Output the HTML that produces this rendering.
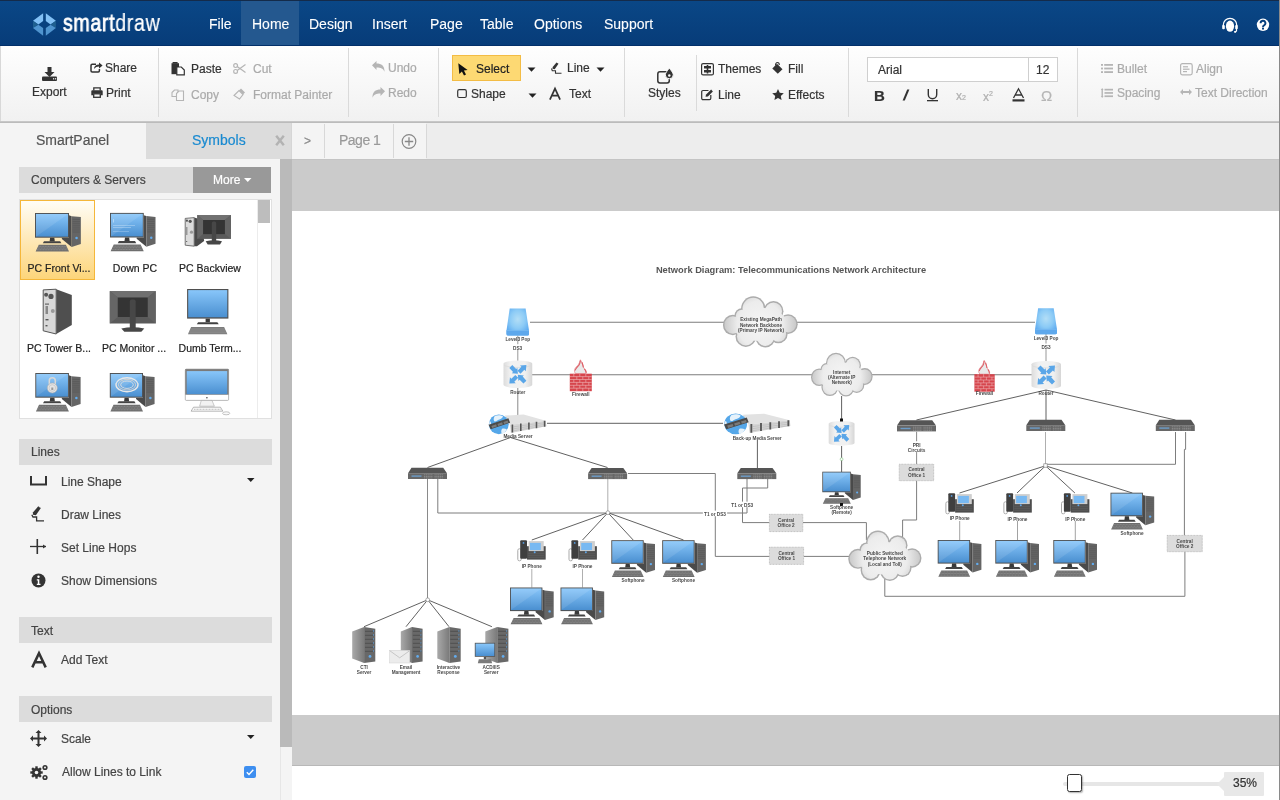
<!DOCTYPE html>
<html><head><meta charset="utf-8">
<style>
*{margin:0;padding:0;box-sizing:border-box}
html,body{width:1280px;height:800px;overflow:hidden;background:#fff;font-family:"Liberation Sans",sans-serif}
body>*{will-change:transform}
.a{position:absolute}
.t{position:absolute;white-space:nowrap;line-height:1;-webkit-text-stroke:0.2px currentColor}
#top{left:0;top:0;width:1280px;height:46px;background:linear-gradient(#0a4786,#073c79);border-top:1px solid #142b4a;border-bottom:1px solid #03306a}
.nav{position:absolute;top:17px;color:#fff;font-size:14px;line-height:1;-webkit-text-stroke:0.1px #fff}
#tb{left:0;top:46px;width:1279px;height:75px;background:linear-gradient(#fefefe,#f1f1f1);border-left:1px solid #d8d8d8}
.sep{position:absolute;width:1px;background:#dadada}
.tt{position:absolute;font-size:12px;line-height:1;color:#333;white-space:nowrap;-webkit-text-stroke:0.2px currentColor}
.dis{color:#aaa}
svg{position:absolute;overflow:visible}
</style></head><body>
<!-- top bar -->
<div class="a" id="top"></div>
<div class="a" style="left:1279px;top:0;width:1px;height:800px;background:#8a8a8a"></div>
<div class="a" style="left:241px;top:1px;width:58px;height:44px;background:#24588f"></div>
<svg style="left:33px;top:12.8px" width="23" height="23" viewBox="0 0 23.2 23.2">
 <polygon points="10.2,0.2 0,7.9 5.4,11.5 10.2,8.1" fill="#82c0f5"/>
 <polygon points="12.9,0.2 23.1,7.9 17.7,11.5 12.9,8.1" fill="#82c0f5"/>
 <polygon points="0,7.9 5.4,11.5 0,15.1" fill="#1f6090"/>
 <polygon points="23.1,7.9 17.7,11.5 23.1,15.1" fill="#1f6090"/>
 <polygon points="0,15.1 5.4,11.8 10.2,15.1 10.2,23" fill="#4f94cf"/>
 <polygon points="23.1,15.1 17.7,11.8 12.9,15.1 12.9,23" fill="#4f94cf"/>
</svg>
<div class="t" style="left:62.5px;top:12px;color:#fff;font-size:23px;transform:scaleX(0.85);transform-origin:0 0;letter-spacing:0.8px"><span style="-webkit-text-stroke:0.8px #fff">smart</span>draw</div>
<div class="nav" style="left:209px">File</div>
<div class="nav" style="left:252px">Home</div>
<div class="nav" style="left:309px">Design</div>
<div class="nav" style="left:372px">Insert</div>
<div class="nav" style="left:430px">Page</div>
<div class="nav" style="left:480px">Table</div>
<div class="nav" style="left:534px">Options</div>
<div class="nav" style="left:604px">Support</div>

<!-- toolbar -->
<div class="a" id="tb"></div>
<div class="a" style="left:0;top:121px;width:1279px;height:2px;background:linear-gradient(#cdcdcd,#b5b5b5)"></div>


<!-- separators -->
<div class="sep" style="left:158px;top:48px;height:69px"></div>
<div class="sep" style="left:348px;top:48px;height:69px"></div>
<div class="sep" style="left:438px;top:48px;height:69px"></div>
<div class="sep" style="left:624px;top:48px;height:69px"></div>
<div class="sep" style="left:696px;top:55px;height:56px"></div>
<div class="sep" style="left:848px;top:48px;height:69px"></div>
<div class="sep" style="left:1077px;top:48px;height:69px"></div>

<!-- Export -->
<svg style="left:42px;top:67px" width="15" height="14" viewBox="0 0 15 14">
 <path d="M5.5 0h4v5h3l-5 5-5-5h3z" fill="#333"/>
 <rect x="0" y="9.5" width="15" height="4.5" rx="1" fill="#333"/>
 <rect x="11" y="11.2" width="1.2" height="1.2" fill="#fff"/><rect x="13" y="11.2" width="1.2" height="1.2" fill="#fff"/>
</svg>
<div class="tt" style="left:32px;top:86px">Export</div>
<!-- Share -->
<svg style="left:90px;top:61px" width="13" height="12" viewBox="0 0 13 12">
 <path d="M6 3.2H2.2a1.2 1.2 0 0 0-1.2 1.2v5.4a1.2 1.2 0 0 0 1.2 1.2h6a1.2 1.2 0 0 0 1.2-1.2V8" fill="none" stroke="#333" stroke-width="1.5"/>
 <path d="M4 8c0-3 2-4.5 5-4.5V1.5l3.6 3-3.6 3V5.5C7 5.5 5.3 6.3 4 8z" fill="#333"/>
</svg>
<div class="tt" style="left:105px;top:62px">Share</div>
<!-- Print -->
<svg style="left:91px;top:87px" width="12" height="11" viewBox="0 0 12 11">
 <path d="M2.8 3.5V0.8h6.4v2.7" fill="none" stroke="#333" stroke-width="1.3"/>
 <path d="M0.3 4.3a1 1 0 0 1 1-1h9.4a1 1 0 0 1 1 1v3.9H9.9V6.6H2.1v1.6H0.3z" fill="#333"/>
 <rect x="2.7" y="6.8" width="6.6" height="3.5" fill="none" stroke="#333" stroke-width="1.3"/>
</svg>
<div class="tt" style="left:106px;top:87px">Print</div>

<!-- Paste -->
<svg style="left:171px;top:62px" width="14" height="13" viewBox="0 0 14 13">
 <path d="M0.5 1.2h7.5v11H0.5z" fill="#333"/>
 <rect x="1.6" y="0" width="5" height="1.6" fill="#333"/>
 <path d="M5.8 5h4.5l3 3v4.8H5.8z" fill="#fff" stroke="#333" stroke-width="1.2"/>
</svg>
<div class="tt" style="left:191px;top:62.6px">Paste</div>
<!-- Cut -->
<svg style="left:233px;top:63px" width="13" height="11" viewBox="0 0 13 11">
 <circle cx="2.6" cy="2.6" r="1.9" fill="none" stroke="#b5b5b5" stroke-width="1.2"/>
 <circle cx="2.6" cy="8.4" r="1.9" fill="none" stroke="#b5b5b5" stroke-width="1.2"/>
 <path d="M4.2 3.6L12.5 9.5M4.2 7.4L12.5 1.5" stroke="#b5b5b5" stroke-width="1.2"/>
</svg>
<div class="tt dis" style="left:252.5px;top:62.6px">Cut</div>
<!-- Copy -->
<svg style="left:171px;top:89px" width="14" height="12" viewBox="0 0 14 12">
 <path d="M1 3.5l2.5-2.5h3.5v6.5H1z" fill="none" stroke="#b5b5b5" stroke-width="1.1"/>
 <path d="M5.5 4.5l2.5-2.5h4.5v9.5H5.5z" fill="#f8f8f8" stroke="#b5b5b5" stroke-width="1.1"/>
</svg>
<div class="tt dis" style="left:191px;top:89px">Copy</div>
<!-- Format painter -->
<svg style="left:233px;top:88px" width="13" height="12" viewBox="0 0 13 12">
 <path d="M1 7.5L6 2.5l4 4-3.5 4.5z" fill="none" stroke="#b5b5b5" stroke-width="1.1"/>
 <path d="M6 2.5L8 0.5l4 4-2 2z" fill="#b5b5b5"/>
</svg>
<div class="tt dis" style="left:252.5px;top:89px">Format Painter</div>

<!-- Undo / Redo -->
<svg style="left:372px;top:61px" width="13" height="11" viewBox="0 0 13 11">
 <path d="M0 4.2L4.5 0v2.6c5 0 8 2 8 8.2-1.2-3-3.5-4.2-8-4.2V9z" fill="#b5b5b5"/>
</svg>
<div class="tt dis" style="left:388px;top:61.6px">Undo</div>
<svg style="left:372px;top:87px" width="13" height="11" viewBox="0 0 13 11">
 <path d="M13 4.2L8.5 0v2.6c-5 0-8 2-8 8.2 1.2-3 3.5-4.2 8-4.2V9z" fill="#b5b5b5"/>
</svg>
<div class="tt dis" style="left:388px;top:86.6px">Redo</div>

<!-- Select button -->
<div class="a" style="left:452px;top:55px;width:69px;height:26px;background:#fdd973;border:1px solid #f3bc45"></div>
<svg style="left:457.5px;top:62.5px" width="10" height="13" viewBox="0 0 10 13">
 <path d="M0.3 0.2L9.6 7 5.9 7.4 8 11.5 6 12.6 3.9 8.4 1.3 11z" fill="#111"/>
</svg>
<div class="tt" style="left:475.5px;top:62.6px;color:#222">Select</div>
<svg style="left:527px;top:67px" width="9" height="5" viewBox="0 0 9 5"><path d="M0.5 0.5h8L4.5 4.8z" fill="#222"/></svg>
<svg style="left:528px;top:93px" width="9" height="5" viewBox="0 0 9 5"><path d="M0.5 0.5h8L4.5 4.8z" fill="#222"/></svg>
<svg style="left:596px;top:67px" width="9" height="5" viewBox="0 0 9 5"><path d="M0.5 0.5h8L4.5 4.8z" fill="#222"/></svg>
<svg style="left:457px;top:89px" width="10" height="9" viewBox="0 0 10 9"><rect x="0.7" y="0.7" width="8.6" height="7.8" rx="1.5" fill="none" stroke="#333" stroke-width="1.2"/></svg>
<div class="tt" style="left:470.5px;top:87.6px">Shape</div>
<!-- Line tool -->
<svg style="left:550px;top:62px" width="12" height="12" viewBox="0 0 12 12">
 <path d="M6.5 0.5l2 1.3-3.8 5.5-2.2-0.5 0.2-1.8z" fill="#333"/>
 <path d="M1.5 6.5l0.8 2.2H5.5v2.5h6" fill="none" stroke="#333" stroke-width="1.1"/>
</svg>
<div class="tt" style="left:567px;top:61.6px">Line</div>
<!-- Text tool -->
<svg style="left:549px;top:88px" width="12" height="12" viewBox="0 0 12 12"><path d="M0.9 11.6L6 0.6 11.1 11.6M2.8 7.6h6.4" fill="none" stroke="#333" stroke-width="1.7"/></svg>
<div class="tt" style="left:568.5px;top:87.6px">Text</div>

<!-- Styles -->
<svg style="left:657px;top:68px" width="17" height="16" viewBox="0 0 17 16">
 <rect x="0.8" y="3.8" width="11.5" height="11.2" rx="2.2" fill="none" stroke="#333" stroke-width="1.5"/>
 <path d="M12.3 0.2c0 0-4 4.5-4 6.6a4 4 0 0 0 8 0c0-2.1-4-6.6-4-6.6z" fill="#333" stroke="#f8f8f8" stroke-width="1"/>
 <circle cx="12.3" cy="7.5" r="1.2" fill="#fff"/>
</svg>
<div class="tt" style="left:647.5px;top:87.2px">Styles</div>
<!-- Themes -->
<svg style="left:701px;top:62.5px" width="13" height="12.5" viewBox="0 0 13 12.5">
 <rect x="0.6" y="0.6" width="11.8" height="11.3" rx="1.5" fill="none" stroke="#333" stroke-width="1.2"/>
 <rect x="3" y="3" width="7" height="2.5" fill="#333"/><rect x="3" y="7" width="7" height="2.5" fill="#333"/>
 <rect x="5.7" y="2" width="1.6" height="8.5" fill="#333"/>
</svg>
<div class="tt" style="left:718px;top:62.6px">Themes</div>
<!-- Fill -->
<svg style="left:772px;top:62px" width="11" height="12" viewBox="0 0 11 12">
 <path d="M0.3 6.5L5 1.8 10.5 7.3 5.8 11.8z" fill="#333"/>
 <path d="M3.5 3.5c0-2 0.8-3 2-3s1.8 1 1.8 2.5" fill="none" stroke="#333" stroke-width="1.1"/>
</svg>
<div class="tt" style="left:787.5px;top:62.6px">Fill</div>
<!-- Line (edit) -->
<svg style="left:701px;top:89px" width="13" height="11" viewBox="0 0 13 11">
 <path d="M7.5 1.5H2a1.3 1.3 0 0 0-1.3 1.3v6.5A1.3 1.3 0 0 0 2 10.6h6.5a1.3 1.3 0 0 0 1.3-1.3V6" fill="none" stroke="#333" stroke-width="1.2"/>
 <path d="M4.5 7.8l0.6-2.2 5-5 1.8 1.8-5 5z" fill="#333"/>
</svg>
<div class="tt" style="left:718px;top:89.2px">Line</div>
<!-- Effects star -->
<svg style="left:772px;top:89px" width="12" height="11" viewBox="0 0 12 11.4">
 <path d="M6 0l1.8 3.8 4.2 0.5-3.1 2.9 0.8 4.2L6 9.3 2.3 11.4l0.8-4.2L0 4.3l4.2-0.5z" fill="#333"/>
</svg>
<div class="tt" style="left:787.5px;top:89.2px">Effects</div>

<!-- Font box -->
<div class="a" style="left:867px;top:57px;width:191px;height:25px;background:#fff;border:1px solid #cfcfcf"></div>
<div class="a" style="left:1028px;top:57px;width:1px;height:25px;background:#cfcfcf"></div>
<div class="tt" style="left:877.5px;top:63.6px;color:#333">Arial</div>
<div class="tt" style="left:1036px;top:63.6px;color:#333">12</div>
<div class="t" style="left:874px;top:87.5px;font-size:15px;font-weight:bold;color:#333">B</div>
<svg style="left:902px;top:89px" width="8" height="12" viewBox="0 0 8 12"><path d="M5.2 0.5h2.2L2.8 11.5H0.6z" fill="#333"/></svg>
<svg style="left:926px;top:88px" width="13" height="14" viewBox="0 0 13 14">
 <path d="M2.3 1v5.5a4.2 4.2 0 0 0 8.4 0V1" fill="none" stroke="#333" stroke-width="1.4"/>
 <rect x="1" y="12" width="11" height="1.3" fill="#333"/>
</svg>
<div class="t" style="left:956px;top:90px;font-size:12px;color:#b0b0b0">x<span style="font-size:7px">2</span></div>
<div class="t" style="left:983px;top:90px;font-size:12px;color:#b0b0b0">x<span style="font-size:7px;vertical-align:5px">2</span></div>
<svg style="left:1012px;top:88px" width="13" height="14" viewBox="0 0 13 14">
 <path d="M1.5 10L6.5 0.8 11.5 10M3.3 7h6.4" fill="none" stroke="#333" stroke-width="1.3"/>
 <rect x="0.5" y="11.3" width="12" height="2.2" fill="#333"/>
</svg>
<div class="t" style="left:1041px;top:87.5px;font-size:15px;color:#b5b5b5">&#937;</div>

<!-- Bullet / Align / Spacing / Direction -->
<svg style="left:1101px;top:64px" width="12" height="9" viewBox="0 0 12 9">
 <g fill="#b5b5b5"><rect x="0" y="0" width="2" height="1.8"/><rect x="0" y="3.6" width="2" height="1.8"/><rect x="0" y="7.2" width="2" height="1.8"/>
 <rect x="3.2" y="0" width="8.8" height="1.8"/><rect x="3.2" y="3.6" width="8.8" height="1.8"/><rect x="3.2" y="7.2" width="8.8" height="1.8"/></g>
</svg>
<div class="tt dis" style="left:1117px;top:62.8px">Bullet</div>
<svg style="left:1180px;top:62.5px" width="13" height="12.5" viewBox="0 0 13 12.5">
 <rect x="0.6" y="0.6" width="11.6" height="11.3" rx="1.8" fill="none" stroke="#b5b5b5" stroke-width="1.2"/>
 <g fill="#b5b5b5"><rect x="3" y="3.2" width="5" height="1.2"/><rect x="3" y="5.6" width="6.5" height="1.2"/><rect x="3" y="8" width="4" height="1.2"/></g>
</svg>
<div class="tt dis" style="left:1196px;top:62.8px">Align</div>
<svg style="left:1101px;top:88px" width="12" height="10" viewBox="0 0 12 10">
 <g fill="#b5b5b5"><path d="M1.2 0L2.6 2H1.9v6h0.7L1.2 10 -0.2 8h0.7V2h-0.7z"/>
 <rect x="3.5" y="0.8" width="8.5" height="1.7"/><rect x="3.5" y="4.1" width="8.5" height="1.7"/><rect x="3.5" y="7.4" width="8.5" height="1.7"/></g>
</svg>
<div class="tt dis" style="left:1117px;top:86.7px">Spacing</div>
<svg style="left:1180px;top:89px" width="12" height="6" viewBox="0 0 12 6">
 <path d="M0 3L3 0v2h6V0l3 3-3 3V4H3v2z" fill="#b5b5b5"/>
</svg>
<div class="tt dis" style="left:1195px;top:86.7px">Text Direction</div>

<!-- top right icons -->
<svg style="left:1220px;top:16px" width="20" height="18" viewBox="0 0 20 18">
 <path d="M3.3 10.5V9A6.7 6.7 0 0 1 16.7 9v1.5" fill="none" stroke="#fff" stroke-width="1.2"/>
 <ellipse cx="10" cy="10.2" rx="4.1" ry="5.6" fill="#fff"/>
 <rect x="2.2" y="9" width="2.6" height="4.2" rx="1" fill="#fff"/><rect x="15.2" y="9" width="2.6" height="4.2" rx="1" fill="#fff"/>
 <path d="M16.5 12.5v2.5l-1.5 1" fill="none" stroke="#fff" stroke-width="1.2"/><rect x="14" y="15" width="2.2" height="1.8" rx="0.8" fill="#fff"/>
</svg>
<svg style="left:1256px;top:18px" width="14" height="14" viewBox="0 0 14 14">
 <circle cx="7" cy="6.8" r="6.2" fill="#fff"/>
 <path d="M4.6 5.2a2.4 2.4 0 1 1 3.5 2.1c-0.8 0.4-1.1 0.8-1.1 1.6" fill="none" stroke="#073f7d" stroke-width="1.9"/>
 <rect x="6" y="9.6" width="2" height="1.9" fill="#073f7d"/>
</svg>


<!-- LEFT PANEL -->
<div class="a" style="left:0;top:123px;width:292px;height:677px;background:#f4f4f4"></div>
<div class="a" style="left:146px;top:123px;width:146px;height:36px;background:#dcdcdc"></div>
<div class="t" style="left:36px;top:132.8px;font-size:14px;color:#555">SmartPanel</div>
<div class="t" style="left:192px;top:132.8px;font-size:14px;color:#1a8ad0">Symbols</div>
<svg style="left:275px;top:135px" width="10" height="11" viewBox="0 0 10 11"><path d="M1.2 0.8L8.8 10.2M8.8 0.8L1.2 10.2" stroke="#b3b3b3" stroke-width="2.5"/></svg>
<div class="a" style="left:280px;top:159px;width:1px;height:641px;background:#e6e6e6"></div>
<div class="a" style="left:280px;top:159px;width:12px;height:588px;background:#bababa"></div>

<div class="a" style="left:19px;top:167px;width:252px;height:26px;background:#dcdcdc"></div>
<div class="t" style="left:31px;top:173.5px;font-size:12px;color:#444">Computers &amp; Servers</div>
<div class="a" style="left:193px;top:167px;width:78px;height:26px;background:#999"></div>
<div class="t" style="left:213px;top:173.5px;font-size:12px;color:#fff">More</div>
<svg style="left:244px;top:178px" width="8" height="4" viewBox="0 0 8 4"><path d="M0 0h7.5L3.75 4z" fill="#fff"/></svg>

<div class="a" style="left:19px;top:199px;width:253px;height:220px;background:#fff;border:1px solid #e0e0e0"></div>
<div class="a" style="left:257px;top:200px;width:1px;height:218px;background:#ececec"></div>
<div class="a" style="left:258px;top:200px;width:12px;height:23px;background:#bdbdbd"></div>
<div class="a" style="left:20px;top:200px;width:75px;height:80px;background:linear-gradient(#fffdf6,#fdd57a);border:1px solid #f5b73a"></div>


<div class="t" style="left:59.3px;top:263.1px;font-size:10.5px;color:#222;transform:translateX(-50%)">PC Front Vi...</div>
<div class="t" style="left:134.9px;top:263.1px;font-size:10.5px;color:#222;transform:translateX(-50%)">Down PC</div>
<div class="t" style="left:209.6px;top:263.1px;font-size:10.5px;color:#222;transform:translateX(-50%)">PC Backview</div>
<div class="t" style="left:59.3px;top:343.1px;font-size:10.5px;color:#222;transform:translateX(-50%)">PC Tower B...</div>
<div class="t" style="left:134.2px;top:343.1px;font-size:10.5px;color:#222;transform:translateX(-50%)">PC Monitor ...</div>
<div class="t" style="left:209.6px;top:343.1px;font-size:10.5px;color:#222;transform:translateX(-50%)">Dumb Term...</div>
<div class="a" style="left:19px;top:439px;width:253px;height:26px;background:#dcdcdc"></div>
<div class="t" style="left:31px;top:446.4px;font-size:12px;color:#444">Lines</div>
<div class="t" style="left:61px;top:476.3px;font-size:12px;color:#444">Line Shape</div>
<div class="t" style="left:61px;top:508.8px;font-size:12px;color:#444">Draw Lines</div>
<div class="t" style="left:61px;top:541.6px;font-size:12px;color:#444">Set Line Hops</div>
<div class="t" style="left:61px;top:574.7px;font-size:12px;color:#444">Show Dimensions</div>
<div class="a" style="left:19px;top:617px;width:253px;height:26px;background:#dcdcdc"></div>
<div class="t" style="left:31px;top:624.5px;font-size:12px;color:#444">Text</div>
<div class="t" style="left:61px;top:654px;font-size:12px;color:#444">Add Text</div>
<div class="a" style="left:19px;top:696px;width:253px;height:26px;background:#dcdcdc"></div>
<div class="t" style="left:31px;top:704.1px;font-size:12px;color:#444">Options</div>
<div class="t" style="left:61px;top:732.8px;font-size:12px;color:#444">Scale</div>
<div class="t" style="left:62px;top:765.6px;font-size:12px;color:#444">Allow Lines to Link</div>

<svg style="left:247px;top:478px" width="8" height="4" viewBox="0 0 8 4"><path d="M0 0h7.5L3.75 4z" fill="#222"/></svg>
<svg style="left:247px;top:735px" width="8" height="4" viewBox="0 0 8 4"><path d="M0 0h7.5L3.75 4z" fill="#222"/></svg>
<svg style="left:244px;top:766px" width="12" height="12" viewBox="0 0 12 12">
 <rect x="0" y="0" width="12" height="12" rx="2" fill="#3d8ef0"/>
 <path d="M2.8 6.2l2.2 2.3 4.3-4.8" fill="none" stroke="#fff" stroke-width="1.4"/>
</svg>
<!-- line shape icon -->
<svg style="left:30px;top:476px" width="17" height="10" viewBox="0 0 17 10"><path d="M1 0v8.5h15V0" fill="none" stroke="#333" stroke-width="2"/></svg>
<!-- draw lines icon -->
<svg style="left:30px;top:506px" width="16" height="16" viewBox="0 0 16 16">
 <path d="M8.3 0.3l2.6 1.7-5 7.2-2.9-0.5-0.1-2.3z" fill="#333"/><path d="M8.8 0.5l1.6 1" stroke="#f4f4f4" stroke-width="0.5"/>
 <path d="M1.8 8.8l1.2 2.2h3.6v3.9h7.4" fill="none" stroke="#333" stroke-width="1.3"/>
</svg>
<!-- line hops icon -->
<svg style="left:30px;top:539px" width="17" height="15" viewBox="0 0 17 15">
 <path d="M0 7.5h16" stroke="#333" stroke-width="1.3"/><path d="M7.3 0v15" stroke="#333" stroke-width="1.6"/>
 <path d="M13 5.5l3 2-3 2z" fill="#333"/>
</svg>
<!-- info icon -->
<svg style="left:31px;top:573px" width="15" height="15" viewBox="0 0 15 15">
 <circle cx="7.5" cy="7.5" r="7" fill="#333"/><circle cx="7.5" cy="3.8" r="1.2" fill="#fff"/>
 <path d="M5.8 6.3h2.5v4.5h1.2v1.3H5.8v-1.3h1v-3.2h-1z" fill="#fff"/>
</svg>
<svg style="left:30.5px;top:652px" width="16" height="16" viewBox="0 0 16 16"><path d="M1.3 15.4L8 1.2 14.7 15.4M3.9 10.2h8.2" fill="none" stroke="#333" stroke-width="2.5" stroke-linejoin="miter" stroke-miterlimit="10"/></svg>
<!-- scale icon (move arrows) -->
<svg style="left:30px;top:730px" width="17" height="17" viewBox="0 0 17 17">
 <path d="M8.5 0l3 3h-2v4.5h4.5v-2l3 3-3 3v-2H9.5V14h2l-3 3-3-3h2V9.5H3v2l-3-3 3-3v2h4.5V3h-2z" fill="#333"/>
</svg>
<!-- gears icon -->
<svg style="left:30px;top:764px" width="19" height="17" viewBox="0 0 19 17">
 <g fill="#333">
 <circle cx="6.5" cy="8.5" r="4.6"/>
 <rect x="5.3" y="2.3" width="2.4" height="12.4"/><rect x="0.3" y="7.3" width="12.4" height="2.4"/>
 <rect x="5.3" y="2.3" width="2.4" height="12.4" transform="rotate(45 6.5 8.5)"/><rect x="5.3" y="2.3" width="2.4" height="12.4" transform="rotate(-45 6.5 8.5)"/>
 <circle cx="15" cy="3.5" r="2.6"/><circle cx="15" cy="13.5" r="2.6"/>
 </g>
 <circle cx="6.5" cy="8.5" r="1.8" fill="#f4f4f4"/><circle cx="15" cy="3.5" r="1" fill="#f4f4f4"/><circle cx="15" cy="13.5" r="1" fill="#f4f4f4"/>
</svg>

<!-- CANVAS -->
<div class="a" style="left:292px;top:123px;width:987px;height:36px;background:#ededed"></div>
<div class="a" style="left:291px;top:123px;width:1px;height:36px;background:#d6d6d6"></div>
<div class="a" style="left:292px;top:123px;width:134px;height:36px;background:#f4f4f4"></div>
<div class="a" style="left:324px;top:124px;width:1px;height:34px;background:#d8d8d8"></div>
<div class="a" style="left:393px;top:124px;width:1px;height:34px;background:#d8d8d8"></div>
<div class="a" style="left:426px;top:124px;width:1px;height:34px;background:#d8d8d8"></div>
<div class="a" style="left:292px;top:159px;width:987px;height:1px;background:#c4c4c4"></div>
<div class="t" style="left:303.5px;top:135px;font-size:12px;color:#888">&gt;</div>
<div class="t" style="left:338.5px;top:133px;font-size:14px;color:#999;letter-spacing:-0.5px">Page 1</div>
<svg style="left:401px;top:134px" width="16" height="16" viewBox="0 0 16 16">
 <circle cx="8" cy="7.5" r="6.8" fill="none" stroke="#888" stroke-width="1.2"/>
 <path d="M8 3.3v8.4M3.8 7.5h8.4" stroke="#888" stroke-width="1.3"/>
</svg>
<div class="a" style="left:292px;top:160px;width:987px;height:50.5px;background:#cbcbcb"></div>
<div class="a" style="left:292px;top:715px;width:987px;height:51px;background:#cbcbcb;border-bottom:1px solid #b8b8b8"></div>
<!-- zoom -->
<div class="a" style="left:1063px;top:782px;width:160px;height:4px;background:#e6e6e6;border-radius:2px"></div>
<div class="a" style="left:1067px;top:774px;width:14.5px;height:18px;background:#fff;border:1.5px solid #333;border-radius:2.5px;box-shadow:1px 1px 1.5px rgba(0,0,0,0.3)"></div>
<svg style="left:1217px;top:772px" width="47" height="24" viewBox="0 0 47 24"><path d="M0 12L7 5V1a1 1 0 0 1 1-1h38a1 1 0 0 1 1 1v22a1 1 0 0 1-1 1H8a1 1 0 0 1-1-1v-4z" fill="#e8e8e8"/></svg>
<div class="t" style="left:1232.5px;top:776.5px;font-size:12px;color:#333">35%</div>

<!--DIAG--><svg style="left:0;top:0" width="1280" height="800" viewBox="0 0 1280 800" font-family="Liberation Sans, sans-serif">
<defs>
 <linearGradient id="scr" x1="0" y1="0" x2="0" y2="1">
  <stop offset="0" stop-color="#88c6fa"/><stop offset="1" stop-color="#4a8fd0"/>
 </linearGradient>
 <radialGradient id="popg" cx="0.5" cy="0.4" r="0.6">
  <stop offset="0" stop-color="#b3def6"/><stop offset="0.55" stop-color="#8ccbf6"/><stop offset="1" stop-color="#5eabf0"/>
 </radialGradient>
 <linearGradient id="cyl" x1="0" y1="0" x2="1" y2="0">
  <stop offset="0" stop-color="#dcdcdc"/><stop offset="0.25" stop-color="#f2f2f2"/><stop offset="0.75" stop-color="#f0f0f0"/><stop offset="1" stop-color="#d6d6d6"/>
 </linearGradient>
 <linearGradient id="tside" x1="0" y1="0" x2="1" y2="0">
  <stop offset="0" stop-color="#a9a9a9"/><stop offset="1" stop-color="#7a7a7a"/>
 </linearGradient>
 <radialGradient id="cg" gradientUnits="userSpaceOnUse" cx="50" cy="36" r="52">
  <stop offset="0" stop-color="#f5f5f5"/><stop offset="0.6" stop-color="#ececec"/><stop offset="1" stop-color="#c4c4c4"/>
 </radialGradient>
 <g id="pc">
  <path d="M32.4 2.2L34.9 3 34.9 32.5 25.6 24.8 25.6 23.6 32.4 23.6z" fill="#4a4a4a"/>
  <path d="M34.9 3L43.7 3.9 43.7 29.7 34.9 32.5z" fill="#656565"/>
  <path d="M35.8 6.2h7M35.8 8.2h7M35.8 10.2h7M35.8 12.2h7M35.8 14.2h7M35.8 16.2h7M35.8 18.2h7" stroke="#575757" stroke-width="0.6"/>
  <circle cx="39.6" cy="23.9" r="1.2" fill="#62acef"/>
  <rect x="0" y="0" width="32.4" height="23.6" fill="#4f4f4f"/>
  <rect x="0.9" y="0.9" width="30.6" height="21.7" fill="url(#scr)"/>
  <path d="M0.9 0.9H31.5L0.9 22.6z" fill="#fff" opacity="0.1"/>
  <path d="M14.4 23.6h4l0.5 3.6h-5z" fill="#3a3a3a"/>
  <path d="M8.6 27h15.4l1.2 2H7.4z" fill="#444"/>
  <path d="M3.6 30.4h25.8l3 6.3H0.6z" fill="#6e6e6e"/>
  <path d="M3.3 31.9h26.4M2.5 33.5h28M1.7 35.1h29.4" stroke="#a0a0a0" stroke-width="0.5" stroke-dasharray="1.1 0.4"/>
 </g>
 <g id="phone">
  <rect x="0.6" y="8.6" width="3.4" height="12" rx="1.5" fill="none" stroke="#a9a9a9" stroke-width="1"/>
  <rect x="9.8" y="6" width="18.7" height="13.4" fill="#4d4d4d"/>
  <rect x="11.5" y="0.9" width="15" height="10" fill="#cfcfcf"/>
  <rect x="12.8" y="2.7" width="10.8" height="7.2" fill="#78b9f2"/>
  <path d="M11 13h16M11 15h16M11 17h16" stroke="#6a6a6a" stroke-width="0.6"/>
  <circle cx="17.5" cy="12" r="1" fill="#5fa5e8"/>
  <rect x="3" y="0" width="6.8" height="18.6" rx="1" fill="#3f3f3f"/>
  <circle cx="6.3" cy="2.7" r="0.9" fill="#5a9ee0"/>
 </g>
 <g id="sw">
  <path d="M3.5 0H35.2L39 5.4H0z" fill="#555"/>
  <rect x="0" y="5.4" width="39" height="5.8" fill="#676767"/>
  <rect x="3.5" y="7.6" width="10" height="1.4" fill="#6c9cc8"/>
  <path d="M16 7h9M16 8.7h9M16 10.2h9M26.5 7h9M26.5 8.7h9M26.5 10.2h9" stroke="#9a9a9a" stroke-width="0.7" stroke-dasharray="1.2 0.6"/>
 </g>
 <g id="router">
  <path d="M0 3.2A14.75 3.2 0 0 1 29.5 3.2V24.8A14.75 3.2 0 0 1 0 24.8z" fill="url(#cyl)"/>
  <path d="M0.5 4.5A14.5 3 0 0 0 29 4.5" fill="none" stroke="#dadada" stroke-width="0.8"/>
  <g fill="#5aa6e8">
   <path d="M6 7.5l3-3 4 4 1.2-1.3 0.6 6.3-6.3-0.6 1.3-1.2z"/>
   <path d="M23.5 4.5l-6.6 0.4 1.5 1.5-4 4 3 3 4-4 1.5 1.5z"/>
   <path d="M6 23.5l6.6-0.4-1.5-1.5 4-4-3-3-4 4-1.5-1.5z"/>
   <path d="M23.5 20.5l-3 3-4-4-1.2 1.3-0.6-6.3 6.3 0.6-1.3 1.2z"/>
  </g>
 </g>
 <g id="fw">
  <path d="M6 14.2C4 12.5 4.3 9.5 6.5 7.5 8.2 6 9.6 4 10.6 0.3 11.8 2 12.2 3.5 12.8 5 13.5 6.5 13.3 7.8 14.6 9.2 16.3 11 17 12.8 16.2 14.2z" fill="#e9e9e9" stroke="#e7878d" stroke-width="0.8"/>
  <path d="M5.3 11C5.8 8.5 8 7.3 9.3 5.5 10 4.5 10.4 3 10.6 1M12.1 2.8C12.8 4.5 13.3 6 13.6 8M14.6 9.4c1 1.1 1.7 2.4 1.6 4" fill="none" stroke="#dd5a62" stroke-width="1.1"/>
  <rect x="0" y="14.2" width="22" height="17.5" fill="#d6454c"/>
  <path d="M0 17.1h22M0 20h22M0 22.9h22M0 25.8h22M0 28.7h22" stroke="#f0b8bb" stroke-width="0.6"/>
  <path d="M4 14.2v2.9M10 14.2v2.9M16 14.2v2.9M7 17.1v2.9M13 17.1v2.9M19 17.1v2.9M4 20v2.9M10 20v2.9M16 20v2.9M7 22.9v2.9M13 22.9v2.9M19 22.9v2.9M4 25.8v2.9M10 25.8v2.9M16 25.8v2.9M7 28.7v2.9M13 28.7v2.9M19 28.7v2.9" stroke="#f0b8bb" stroke-width="0.6"/>
 </g>
 <g id="pop">
  <path d="M3.2 0H19.1L22.5 22V25.5Q22.5 27 21 27H1.5Q0 27 0 25.5V22z" fill="url(#popg)"/>
  <path d="M0 22H22.5V25.5Q22.5 27 21 27H1.5Q0 27 0 25.5z" fill="#5ea8ec"/>
  <path d="M0 22H22.5" stroke="#7dbdf2" stroke-width="0.6"/>
 </g>
 <g id="srv">
  <path d="M16.2 1.3L35 0.3 57.3 6.4 21.3 10.45z" fill="#e2e2e2"/>
  <path d="M21.3 10.45L57.3 6.4 57.8 12 22.3 18.6z" fill="#d6d6d6"/>
  <path d="M25 12.5L31 11.7M25 14.5L31 13.6M25 16.5L31 15.4M33.5 11.3L39.3 10.6M33.5 13.2L39.3 12.3M33.5 15.1L39.3 14.1M41.6 10.2L47 9.6M41.6 12.1L47 11.3M41.6 13.9L47 12.9M49.2 9.3L55 8.6M49.2 11.1L55 10.3M49.2 12.9L55 11.9" stroke="#b5b5b5" stroke-width="0.55"/>
  <path d="M23.8 10.17V18.32M32.2 9.23V16.76M40.3 8.32V15.25M47.9 7.46V13.84M56 6.55V12.33" stroke="#555" stroke-width="1.6"/>
  <circle cx="10.2" cy="10" r="9.9" fill="#55a7e9"/>
  <path d="M6.5 1.5c2.5-1 6-0.8 8 0.5-0.5 2-2.5 3-4.5 3.5-1.5 0.3-2 2-4 1.8-1-1-1.5-3.5 0.5-5.8zM13.5 14.5c1.8-0.5 3.5 0 4.8 0.8-1 2.2-2.8 3.8-5 4.3-0.8-1.5-1-3.5 0.2-5.1zM1.5 7c1 1 1.2 2.5 0.8 3.8L0.6 11.5C0.3 10 0.6 8.2 1.5 7z" fill="#e6f2fb"/>
  <path d="M0 10.5L19.8 3.9 21.5 8.4 2 15z" fill="#4b4b4b"/>
  <path d="M2.8 11.6L7.5 10 8.3 12.2 3.6 13.8zM8.8 9.6L13.5 8 14.3 10.2 9.6 11.8zM14.8 7.6L19 6.2 19.8 8.4 15.6 9.8z" fill="#7a7a7a"/>
 </g>
 <g id="tower">
  <path d="M0 4.5L11.9 0V36.1L0 31.5z" fill="url(#tside)"/>
  <path d="M11.9 0L23.1 1.8V34.5L11.9 36.1z" fill="#686868"/>
  <path d="M12.8 4.5h9.4M12.8 8.5h9.4M12.8 12.5h9.4M12.8 16.5h9.4M12.8 20.5h9.4M12.8 24.5h9.4" stroke="#545454" stroke-width="1.1"/>
  <path d="M21.3 3.5v1.2M21.3 7.5v1.2M21.3 11.5v1.2M21.3 15.5v1.2M21.3 19.5v1.2M21.3 23.5v1.2" stroke="#62acef" stroke-width="0.9"/>
  <circle cx="17.8" cy="29.5" r="1.4" fill="#62acef"/>
 </g>
 <g id="cloud">
  <g fill="#acacac">
   <circle cx="40.6" cy="15.2" r="16.6"/><circle cx="68.3" cy="18.4" r="13.6"/><circle cx="88.3" cy="35.7" r="13.1"/><circle cx="75" cy="48.7" r="12.6"/>
   <circle cx="57.2" cy="53.1" r="13.6"/><circle cx="30.5" cy="52" r="14.1"/><circle cx="12.8" cy="36.8" r="13.6"/><circle cx="25" cy="24.7" r="10.1"/>
  </g>
  <g fill="url(#cg)">
   <circle cx="40.6" cy="15.2" r="14.6"/><circle cx="68.3" cy="18.4" r="11.6"/><circle cx="88.3" cy="35.7" r="11.1"/><circle cx="75" cy="48.7" r="10.6"/>
   <circle cx="57.2" cy="53.1" r="11.6"/><circle cx="30.5" cy="52" r="12.1"/><circle cx="12.8" cy="36.8" r="11.6"/><circle cx="25" cy="24.7" r="8.1"/>
   <ellipse cx="50" cy="36" rx="38" ry="22"/>
  </g>
 </g>
</defs>

<text x="791" y="272.5" font-size="9.3" font-weight="bold" fill="#555" text-anchor="middle">Network Diagram: Telecommunications Network Architecture</text>
<path d="M530 322.3 L724 322.3" fill="none" stroke="#7d7d7d" stroke-width="1.1"/>
<path d="M796 322.3 L1035 322.3" fill="none" stroke="#7d7d7d" stroke-width="1.1"/>
<path d="M517.8 335.6 L517.8 361" fill="none" stroke="#7d7d7d" stroke-width="0.8"/>
<path d="M1046 334 L1046 361" fill="none" stroke="#7d7d7d" stroke-width="0.8"/>
<path d="M532 374.75 L812 374.75" fill="none" stroke="#7d7d7d" stroke-width="1.1"/>
<path d="M871 374.75 L1032 374.75" fill="none" stroke="#7d7d7d" stroke-width="1.1"/>
<path d="M841.6 396 L841.6 421" fill="none" stroke="#4f4f4f" stroke-width="0.9"/>
<path d="M841.6 446 L841.6 472" fill="none" stroke="#4f4f4f" stroke-width="0.9"/>
<path d="M517.8 388 L517.8 415" fill="none" stroke="#7d7d7d" stroke-width="0.9"/>
<path d="M547 423.3 L723 423.3" fill="none" stroke="#4f4f4f" stroke-width="0.9"/>
<path d="M757.4 440 L757.4 468" fill="none" stroke="#4f4f4f" stroke-width="0.9"/>
<path d="M510.5 437.5 L427.5 467.5" fill="none" stroke="#4f4f4f" stroke-width="0.9"/>
<path d="M510.5 437.5 L607.5 467.5" fill="none" stroke="#4f4f4f" stroke-width="0.9"/>
<path d="M1046 390 L916.4 420" fill="none" stroke="#4f4f4f" stroke-width="0.9"/>
<path d="M1046 390 L1046 420" fill="none" stroke="#4f4f4f" stroke-width="0.9"/>
<path d="M1046 390 L1175.5 420" fill="none" stroke="#4f4f4f" stroke-width="0.9"/>
<path d="M427.5 479 L427.5 599.8" fill="none" stroke="#7d7d7d" stroke-width="0.9"/>
<path d="M437.8 479 L437.8 513 L747 513 L747 479" fill="none" stroke="#7d7d7d" stroke-width="1.0"/>
<path d="M607.8 479 L607.8 512.7" fill="none" stroke="#9a9a9a" stroke-width="0.8"/>
<path d="M628 473.5 L715.3 473.5 L715.3 556.4 L769.4 556.4" fill="none" stroke="#7d7d7d" stroke-width="1.0"/>
<path d="M767.7 479 L767.7 488 L742.5 488 L742.5 522.6 L769.4 522.6" fill="none" stroke="#7d7d7d" stroke-width="1.0"/>
<path d="M803 522.6 L866.4 522.6 L866.4 540" fill="none" stroke="#7d7d7d" stroke-width="1.0"/>
<path d="M803.6 556.4 L850 556.4" fill="none" stroke="#7d7d7d" stroke-width="1.0"/>
<path d="M902.6 540 L902.6 520 L916.6 520 L916.6 480.7" fill="none" stroke="#7d7d7d" stroke-width="1.0"/>
<path d="M884.8 579 L884.8 596.3 L1184.9 596.3 L1184.9 551.7" fill="none" stroke="#7d7d7d" stroke-width="1.0"/>
<path d="M916.6 431.8 L916.6 464.2" fill="none" stroke="#7d7d7d" stroke-width="0.9"/>
<path d="M607.9 512.7 L531.8 540" fill="none" stroke="#4f4f4f" stroke-width="0.9"/>
<path d="M607.9 512.7 L582.5 540" fill="none" stroke="#4f4f4f" stroke-width="0.9"/>
<path d="M607.9 512.7 L633.2 540" fill="none" stroke="#4f4f4f" stroke-width="0.9"/>
<path d="M607.9 512.7 L683.5 540" fill="none" stroke="#4f4f4f" stroke-width="0.9"/>
<path d="M531.8 569 L531.8 587.5" fill="none" stroke="#9a9a9a" stroke-width="0.8"/>
<path d="M582.5 569 L582.5 587.5" fill="none" stroke="#9a9a9a" stroke-width="0.8"/>
<path d="M427.7 599.8 L364 626.7" fill="none" stroke="#4f4f4f" stroke-width="0.9"/>
<path d="M427.7 599.8 L406 626.7" fill="none" stroke="#4f4f4f" stroke-width="0.9"/>
<path d="M427.7 599.8 L449 626.7" fill="none" stroke="#4f4f4f" stroke-width="0.9"/>
<path d="M427.7 599.8 L491.9 626.7" fill="none" stroke="#4f4f4f" stroke-width="0.9"/>
<path d="M1045.5 432 L1045.5 465.8" fill="none" stroke="#9a9a9a" stroke-width="0.8"/>
<path d="M1045.5 464.3 L1175.5 464.3 L1175.5 432" fill="none" stroke="#7d7d7d" stroke-width="1.0"/>
<path d="M1185.6 432 L1185.6 449.4 L1184.4 449.4 L1184.4 535.4" fill="none" stroke="#7d7d7d" stroke-width="1.0"/>
<path d="M1045.5 465.8 L959.5 493" fill="none" stroke="#4f4f4f" stroke-width="0.9"/>
<path d="M1045.5 465.8 L1017 493" fill="none" stroke="#4f4f4f" stroke-width="0.9"/>
<path d="M1045.5 465.8 L1074.9 493" fill="none" stroke="#4f4f4f" stroke-width="0.9"/>
<path d="M1045.5 465.8 L1132.4 493" fill="none" stroke="#4f4f4f" stroke-width="0.9"/>
<path d="M959.7 521 L959.7 540" fill="none" stroke="#8a8a8a" stroke-width="0.8"/>
<path d="M1017.5 521 L1017.5 540" fill="none" stroke="#8a8a8a" stroke-width="0.8"/>
<path d="M1075.3 521 L1075.3 540" fill="none" stroke="#8a8a8a" stroke-width="0.8"/>
<circle cx="607.9" cy="512.7" r="1.9" fill="#fff" stroke="#8a8a8a" stroke-width="0.7"/>
<circle cx="427.7" cy="599.8" r="1.9" fill="#fff" stroke="#8a8a8a" stroke-width="0.7"/>
<rect x="1043.8" y="463.8" width="3.4" height="3.4" fill="#fff" stroke="#8a8a8a" stroke-width="0.7"/>
<use href="#cloud" transform="translate(723.5 297.3) scale(0.7320000000000004 0.751515151515151)"/>
<text x="761" y="321.34499999999997" font-size="4.7" font-weight="bold" fill="#4a4a4a" text-anchor="middle">Existing MegaPath</text>
<text x="761" y="326.74499999999995" font-size="4.7" font-weight="bold" fill="#4a4a4a" text-anchor="middle">Network Backbone</text>
<text x="761" y="332.145" font-size="4.7" font-weight="bold" fill="#4a4a4a" text-anchor="middle">(Primary IP Network)</text>
<use href="#cloud" transform="translate(811.5 353.6) scale(0.6029999999999995 0.6424242424242421)"/>
<text x="841.7" y="373.945" font-size="4.7" font-weight="bold" fill="#4a4a4a" text-anchor="middle">Internet</text>
<text x="841.7" y="379.145" font-size="4.7" font-weight="bold" fill="#4a4a4a" text-anchor="middle">(Alternate IP</text>
<text x="841.7" y="384.34499999999997" font-size="4.7" font-weight="bold" fill="#4a4a4a" text-anchor="middle">Network)</text>
<use href="#cloud" transform="translate(848.8 531.6) scale(0.7170000000000004 0.7393939393939387)"/>
<text x="884.8" y="554.845" font-size="4.7" font-weight="bold" fill="#4a4a4a" text-anchor="middle">Public Switched</text>
<text x="884.8" y="560.445" font-size="4.7" font-weight="bold" fill="#4a4a4a" text-anchor="middle">Telephone Network</text>
<text x="884.8" y="566.0450000000001" font-size="4.7" font-weight="bold" fill="#4a4a4a" text-anchor="middle">(Local and Toll)</text>
<use href="#pop" transform="translate(506.5 308.5) scale(1 1)"/>
<use href="#pop" transform="translate(1035 308.2) scale(0.9777777777777777 0.9629629629629629)"/>
<text x="517.8" y="341.04499999999996" font-size="4.7" font-weight="bold" fill="#4a4a4a" text-anchor="middle">Level3 Pop</text>
<rect x="513.2225" y="344.24" width="8.755000000000003" height="5.570000000000001" fill="#fff"/>
<text x="517.6" y="349.645" font-size="4.7" font-weight="bold" fill="#4a4a4a" text-anchor="middle">DS3</text>
<text x="1046" y="340.34499999999997" font-size="4.7" font-weight="bold" fill="#4a4a4a" text-anchor="middle">Level3 Pop</text>
<rect x="1041.6225" y="343.54" width="8.755000000000003" height="5.570000000000001" fill="#fff"/>
<text x="1046" y="348.945" font-size="4.7" font-weight="bold" fill="#4a4a4a" text-anchor="middle">DS3</text>
<use href="#router" transform="translate(503.5 360.6) scale(0.9745762711864406 0.9785714285714285)"/>
<use href="#router" transform="translate(1031.5 361) scale(1 1)"/>
<use href="#router" transform="translate(828.7 421) scale(0.8745762711864407 0.8821428571428571)"/>
<text x="517.8" y="394.145" font-size="4.7" font-weight="bold" fill="#4a4a4a" text-anchor="middle">Router</text>
<text x="1046" y="394.645" font-size="4.7" font-weight="bold" fill="#4a4a4a" text-anchor="middle">Router</text>
<use href="#fw" transform="translate(569.8 359.5) scale(1 1)"/>
<use href="#fw" transform="translate(974.4 360) scale(0.9227272727272727 1)"/>
<text x="580.8" y="396.04499999999996" font-size="4.7" font-weight="bold" fill="#4a4a4a" text-anchor="middle">Firewall</text>
<text x="984.5" y="395.04499999999996" font-size="4.7" font-weight="bold" fill="#4a4a4a" text-anchor="middle">Firewall</text>
<rect x="840" y="418.5" width="3" height="3" fill="#111"/>
<circle cx="841.6" cy="459.2" r="1.4" fill="#fff" stroke="#7cc07c" stroke-width="0.6"/>
<use href="#srv" transform="translate(488.6 414.3) scale(1 1)"/>
<text x="518" y="438.34499999999997" font-size="4.7" font-weight="bold" fill="#4a4a4a" text-anchor="middle">Media Server</text>
<use href="#srv" transform="translate(724 413.4) scale(1.1487889273356402 1.0510204081632653)"/>
<text x="757.2" y="440.04499999999996" font-size="4.7" font-weight="bold" fill="#4a4a4a" text-anchor="middle">Back-up Media Server</text>
<use href="#sw" transform="translate(408 467.8) scale(1 1)"/>
<use href="#sw" transform="translate(588.1 467.9) scale(1 1)"/>
<use href="#sw" transform="translate(737.3 467.9) scale(1 1)"/>
<use href="#sw" transform="translate(897 420.2) scale(1 1)"/>
<use href="#sw" transform="translate(1026.3 419.8) scale(1 1)"/>
<use href="#sw" transform="translate(1155.8 419.8) scale(1 1)"/>
<rect x="905.76" y="441.24" width="21.680000000000003" height="10.8" fill="#fff"/>
<text x="916.6" y="446.645" font-size="4.7" font-weight="bold" fill="#4a4a4a" text-anchor="middle">PRI</text>
<text x="916.6" y="451.84499999999997" font-size="4.7" font-weight="bold" fill="#4a4a4a" text-anchor="middle">Circuits</text>
<rect x="899.2" y="464.2" width="34.5" height="16.5" fill="#dcdcdc" stroke="#a2a2a2" stroke-width="0.6" stroke-dasharray="0.9 0.6"/>
<text x="916.6" y="471.145" font-size="4.7" font-weight="bold" fill="#4a4a4a" text-anchor="middle">Central</text>
<text x="916.6" y="476.645" font-size="4.7" font-weight="bold" fill="#4a4a4a" text-anchor="middle">Office 1</text>
<rect x="769.4" y="514.3" width="33.39999999999998" height="17.300000000000068" fill="#dcdcdc" stroke="#a2a2a2" stroke-width="0.6" stroke-dasharray="0.9 0.6"/>
<text x="786.1" y="521.9449999999999" font-size="4.7" font-weight="bold" fill="#4a4a4a" text-anchor="middle">Central</text>
<text x="786.1" y="527.045" font-size="4.7" font-weight="bold" fill="#4a4a4a" text-anchor="middle">Office 2</text>
<rect x="769.4" y="547.2" width="34.200000000000045" height="17.199999999999932" fill="#dcdcdc" stroke="#a2a2a2" stroke-width="0.6" stroke-dasharray="0.9 0.6"/>
<text x="786.5" y="555.045" font-size="4.7" font-weight="bold" fill="#4a4a4a" text-anchor="middle">Central</text>
<text x="786.5" y="559.8449999999999" font-size="4.7" font-weight="bold" fill="#4a4a4a" text-anchor="middle">Office 1</text>
<rect x="1167.2" y="535.4" width="35.09999999999991" height="16.300000000000068" fill="#dcdcdc" stroke="#a2a2a2" stroke-width="0.6" stroke-dasharray="0.9 0.6"/>
<text x="1184.7" y="543.145" font-size="4.7" font-weight="bold" fill="#4a4a4a" text-anchor="middle">Central</text>
<text x="1184.7" y="547.9449999999999" font-size="4.7" font-weight="bold" fill="#4a4a4a" text-anchor="middle">Office 2</text>
<rect x="702.8675" y="510.64" width="24.265000000000004" height="5.570000000000001" fill="#fff"/>
<text x="715" y="516.045" font-size="4.7" font-weight="bold" fill="#4a4a4a" text-anchor="middle">T1 or DS3</text>
<rect x="730.1674999999999" y="501.64" width="24.265000000000004" height="5.570000000000001" fill="#fff"/>
<text x="742.3" y="507.04499999999996" font-size="4.7" font-weight="bold" fill="#4a4a4a" text-anchor="middle">T1 or DS3</text>
<use href="#pc" transform="translate(822.3 471.7) scale(0.8796296296296297 0.87)"/>
<rect x="840" y="503" width="3" height="3" fill="#111"/>
<text x="841.6" y="509.245" font-size="4.7" font-weight="bold" fill="#4a4a4a" text-anchor="middle">Softphone</text>
<text x="841.6" y="514.145" font-size="4.7" font-weight="bold" fill="#4a4a4a" text-anchor="middle">(Remote)</text>
<use href="#phone" transform="translate(517.2 540.2) scale(1 1)"/>
<use href="#phone" transform="translate(568.4 540.2) scale(1 1)"/>
<text x="531.8" y="567.9449999999999" font-size="4.7" font-weight="bold" fill="#4a4a4a" text-anchor="middle">IP Phone</text>
<text x="582.5" y="567.9449999999999" font-size="4.7" font-weight="bold" fill="#4a4a4a" text-anchor="middle">IP Phone</text>
<use href="#pc" transform="translate(611.3 540.2) scale(1 1)"/>
<use href="#pc" transform="translate(662.2 540.2) scale(1 1)"/>
<text x="633" y="581.9449999999999" font-size="4.7" font-weight="bold" fill="#4a4a4a" text-anchor="middle">Softphone</text>
<text x="683.5" y="581.9449999999999" font-size="4.7" font-weight="bold" fill="#4a4a4a" text-anchor="middle">Softphone</text>
<use href="#pc" transform="translate(510 587.5) scale(1 1)"/>
<use href="#pc" transform="translate(560.5 587.5) scale(1 1)"/>
<use href="#tower" transform="translate(352.2 626.9) scale(1 1)"/>
<use href="#tower" transform="translate(400.8 626.9) scale(0.9437229437229437 1)"/>
<g transform="translate(389.6 650.3)"><rect x="0" y="0" width="20.2" height="12.7" fill="#ececec" stroke="#d0d0d0" stroke-width="0.5"/><path d="M0.3 0.5L10.1 7.5 19.9 0.5" fill="none" stroke="#bcbcbc" stroke-width="0.8"/></g>
<use href="#tower" transform="translate(437.3 626.9) scale(1.0129870129870129 1)"/>
<use href="#tower" transform="translate(485.3 626.9) scale(1 1)"/>
<g transform="translate(474.8 642.8)"><rect x="0" y="0" width="20.3" height="14" fill="#555"/><rect x="0.8" y="0.8" width="18.7" height="12.4" fill="url(#scr)"/><rect x="9" y="14" width="2.3" height="2.5" fill="#555"/><path d="M4 16.5h12.3l1 3.9H3z" fill="#7a7a7a"/></g>
<text x="364.1" y="669.245" font-size="4.7" font-weight="bold" fill="#4a4a4a" text-anchor="middle">CTI</text>
<text x="364.1" y="674.045" font-size="4.7" font-weight="bold" fill="#4a4a4a" text-anchor="middle">Server</text>
<text x="406" y="669.145" font-size="4.7" font-weight="bold" fill="#4a4a4a" text-anchor="middle">Email</text>
<text x="406" y="674.245" font-size="4.7" font-weight="bold" fill="#4a4a4a" text-anchor="middle">Management</text>
<text x="448.5" y="668.845" font-size="4.7" font-weight="bold" fill="#4a4a4a" text-anchor="middle">Interactive</text>
<text x="448.5" y="674.245" font-size="4.7" font-weight="bold" fill="#4a4a4a" text-anchor="middle">Response</text>
<text x="491.2" y="668.845" font-size="4.7" font-weight="bold" fill="#4a4a4a" text-anchor="middle">ACD/IIS</text>
<text x="491.2" y="673.945" font-size="4.7" font-weight="bold" fill="#4a4a4a" text-anchor="middle">Server</text>
<use href="#phone" transform="translate(945.3 493.2) scale(1 1)"/>
<use href="#phone" transform="translate(1003.3 493.2) scale(1 1)"/>
<use href="#phone" transform="translate(1060.9 493.2) scale(1 1)"/>
<text x="959.7" y="519.9449999999999" font-size="4.7" font-weight="bold" fill="#4a4a4a" text-anchor="middle">IP Phone</text>
<text x="1017.5" y="521.045" font-size="4.7" font-weight="bold" fill="#4a4a4a" text-anchor="middle">IP Phone</text>
<text x="1075.3" y="521.045" font-size="4.7" font-weight="bold" fill="#4a4a4a" text-anchor="middle">IP Phone</text>
<use href="#pc" transform="translate(1110.5 492.7) scale(1 1)"/>
<text x="1132" y="534.845" font-size="4.7" font-weight="bold" fill="#4a4a4a" text-anchor="middle">Softphone</text>
<use href="#pc" transform="translate(937.7 540) scale(1 1)"/>
<use href="#pc" transform="translate(995.3 540) scale(1 1)"/>
<use href="#pc" transform="translate(1053.3 540) scale(1 1)"/>
<g id="panelicons">
<use href="#pc" transform="translate(35 213) scale(1.0493827160493827 1.0466101694915253)"/>
<use href="#pc" transform="translate(110 212.9) scale(1.0416666666666667 1.042372881355932)"/>
<g fill="#cfe6fb" opacity="0.8"><rect x="113" y="219" width="0.8" height="3.5"/><rect x="113" y="225.5" width="22" height="0.5"/><rect x="113" y="227" width="18" height="0.5"/><rect x="113" y="231.5" width="16" height="0.4"/></g>
<g transform="translate(180 210)"><path d="M14.2 7.6L17.5 8.4 24.1 30 24.1 31 17 36.2 14.2 36.2z" fill="#4a4a4a"/><path d="M5.2 8.4L14.2 7.6V36.2L5.2 35.2z" fill="#dcdcdc" stroke="#555" stroke-width="0.8"/><circle cx="6.9" cy="10.7" r="1.1" fill="#555"/><circle cx="10.2" cy="11.3" r="1.6" fill="#555"/><circle cx="11.5" cy="22.2" r="1.6" fill="#999"/><rect x="6" y="17" width="1.5" height="8" fill="#999"/><rect x="6.2" y="31" width="1" height="1" fill="#555"/><rect x="17.3" y="5" width="33.6" height="23.9" fill="#5a5a5a"/><path d="M17.3 5H50.9L44.9 10H23.1z" fill="#717171"/><path d="M17.3 5V28.9L23.1 24.1V10z" fill="#666"/><path d="M50.9 5V28.9L44.9 24.1V10z" fill="#636363"/><rect x="23.1" y="10" width="21.8" height="14.1" fill="#343434"/><rect x="31.8" y="11.5" width="4.4" height="22" rx="1.5" fill="#474747"/><path d="M25.7 31.2Q34 29.5 42 31.2L40 34.6H27.7z" fill="#474747"/></g>
<g transform="translate(38 286)"><path d="M18.2 3.2L33.8 9.1V39L18.2 48z" fill="#4f4f4f"/><path d="M5.2 3.9L18.2 3.2V48L5.2 44.8z" fill="#d8d8d8" stroke="#555" stroke-width="1"/><circle cx="8.1" cy="8.8" r="2" fill="#555"/><circle cx="13" cy="10.4" r="2.6" fill="#555"/><rect x="7" y="17.5" width="4" height="1.2" fill="#666"/><rect x="7.5" y="20" width="2.5" height="8" fill="#888"/><circle cx="14.8" cy="25" r="2" fill="#999"/><rect x="7.5" y="33" width="3" height="1.4" fill="#555"/><rect x="7.5" y="39" width="2" height="1.4" fill="#555"/></g>
<g transform="translate(109.8 291.1)"><rect x="0" y="0" width="45.9" height="32.4" fill="#5a5a5a"/><path d="M0 0H45.9L37.9 6.5H8z" fill="#707070"/><path d="M0 0V32.4L8 25.9V6.5z" fill="#666"/><path d="M45.9 0V32.4L37.9 25.9V6.5z" fill="#626262"/><rect x="8" y="6.5" width="29.9" height="19.4" fill="#343434"/><rect x="20" y="8.5" width="5.9" height="31" rx="2" fill="#474747"/><path d="M11.5 37.5Q23 35 34.5 37.5L31.5 40.6H14.5z" fill="#474747"/></g>
<g transform="translate(187.1 289)"><rect x="0" y="0" width="41.3" height="29.6" fill="#4f4f4f"/><rect x="1.1" y="1.1" width="39.1" height="27.2" fill="url(#scr)"/><rect x="18.5" y="29.6" width="4.3" height="3.6" fill="#3a3a3a"/><path d="M11 33.2h19.3l1.3 2H9.7z" fill="#404040"/><path d="M4 38h33l3.3 7.3H0.9z" fill="#7c7c7c"/><path d="M3.3 40h34.4M2.4 42h36.2M1.6 43.8h37.8" stroke="#9c9c9c" stroke-width="0.6"/></g>
<use href="#pc" transform="translate(35.3 373) scale(1.0370370370370372 1.0466101694915253)"/>
<g transform="translate(52.3 388)"><path d="M-3 -4v-3.3a3 3 0 0 1 6 0V-4" fill="none" stroke="#d8d8d8" stroke-width="1.5"/><circle cx="0" cy="0" r="5" fill="#e4e4e4" stroke="#b0b0b0" stroke-width="0.6"/><circle cx="0" cy="0" r="3.3" fill="none" stroke="#bcbcbc" stroke-width="0.6"/><path d="M-1 -0.5h2v2.5h-2z" fill="#999"/></g>
<use href="#pc" transform="translate(109.8 373) scale(1.0246913580246915 1.0466101694915253)"/>
<g transform="translate(127 384.7)" fill="none"><ellipse rx="11" ry="7" stroke="#e8e8e8" stroke-width="1.4"/><ellipse rx="8.6" ry="5.3" stroke="#cfcfcf" stroke-width="1"/><ellipse rx="6.3" ry="3.7" stroke="#e0e0e0" stroke-width="0.9"/></g>
<g transform="translate(180 364)"><rect x="5.3" y="5.1" width="43.3" height="31.3" rx="1" fill="#fff" stroke="#8a8a8a" stroke-width="0.6"/><rect x="5.3" y="5.1" width="43.3" height="25.6" fill="#7a7a7a"/><rect x="6.7" y="7.1" width="40.5" height="23.1" fill="url(#scr)"/><circle cx="26.9" cy="33.8" r="0.8" fill="#444"/><path d="M21.3 36.4H32L34.4 42.2H19.6z" fill="#f2f2f2" stroke="#9a9a9a" stroke-width="0.5"/><path d="M13.5 43.2H40.5L42.8 47.2H11.1z" fill="#fafafa" stroke="#8a8a8a" stroke-width="0.6"/><path d="M14 45.3h27" stroke="#999" stroke-width="0.6" stroke-dasharray="1 0.5"/><ellipse cx="46.2" cy="49.3" rx="3.6" ry="1.5" fill="#fafafa" stroke="#8a8a8a" stroke-width="0.5"/></g>
</g></svg><!--/DIAG-->
</body></html>
